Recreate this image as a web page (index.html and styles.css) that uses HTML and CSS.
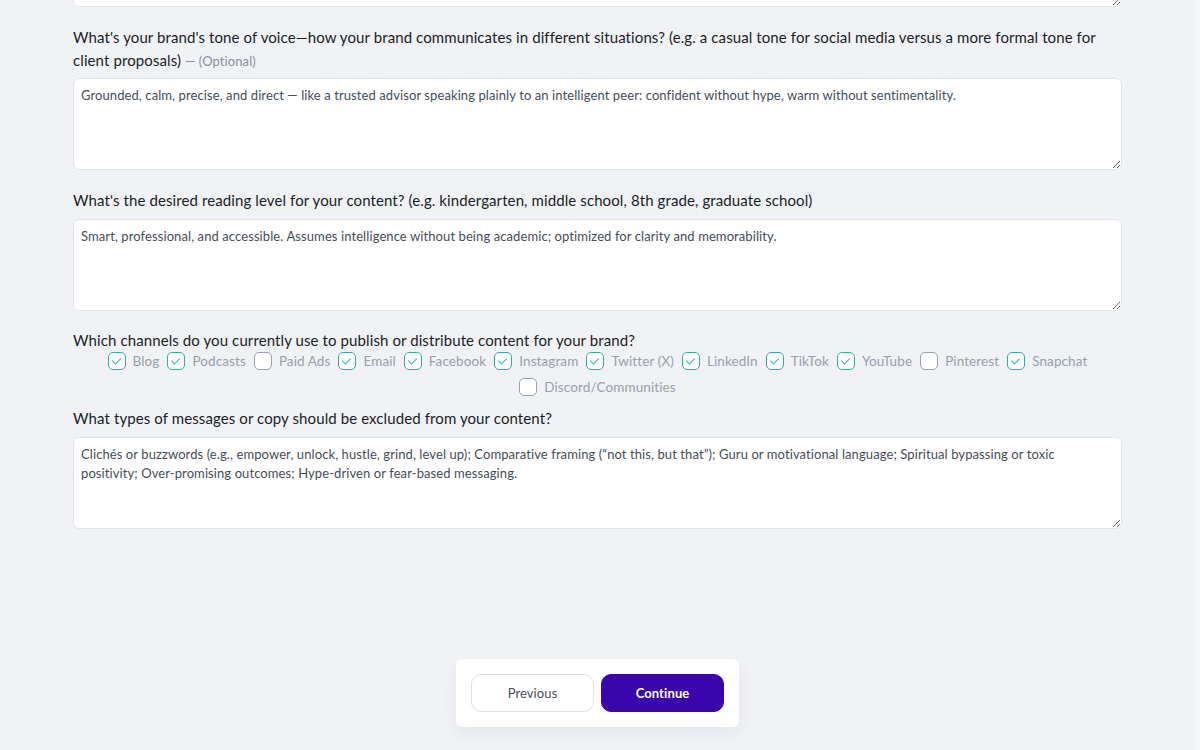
FILE: index.html
```html
<!DOCTYPE html>
<html lang="en">
<head>
<meta charset="utf-8">
<title>Brand voice</title>
<link rel="stylesheet" href="styles.css">
</head>
<body>
<div class="viewport">
  <main class="page">
    <div class="form">
      <div class="field field-first">
        <textarea class="box" aria-label="Previous answer"></textarea>
      </div>

      <div class="field">
        <label class="question q-two">What's your brand's tone of voice—how your brand communicates in different situations? (e.g. a casual tone for social media versus a more formal tone for client proposals) <span class="optional">— (Optional)</span></label>
        <textarea class="box">Grounded, calm, precise, and direct — like a trusted advisor speaking plainly to an intelligent peer: confident without hype, warm without sentimentality.</textarea>
      </div>

      <div class="field">
        <label class="question">What's the desired reading level for your content? (e.g. kindergarten, middle school, 8th grade, graduate school)</label>
        <textarea class="box">Smart, professional, and accessible. Assumes intelligence without being academic; optimized for clarity and memorability.</textarea>
      </div>

      <div class="field">
        <div class="question q-tight">Which channels do you currently use to publish or distribute content for your brand?</div>
        <div class="checks">
          <label class="check on"><span class="tick"></span>Blog</label>
          <label class="check on"><span class="tick"></span>Podcasts</label>
          <label class="check"><span class="tick"></span>Paid Ads</label>
          <label class="check on"><span class="tick"></span>Email</label>
          <label class="check on"><span class="tick"></span>Facebook</label>
          <label class="check on"><span class="tick"></span>Instagram</label>
          <label class="check on"><span class="tick"></span>Twitter (X)</label>
          <label class="check on"><span class="tick"></span>LinkedIn</label>
          <label class="check on"><span class="tick"></span>TikTok</label>
          <label class="check on"><span class="tick"></span>YouTube</label>
          <label class="check"><span class="tick"></span>Pinterest</label>
          <label class="check on"><span class="tick"></span>Snapchat</label>
          <label class="check"><span class="tick"></span>Discord/Communities</label>
        </div>
      </div>

      <div class="field field-after-checks">
        <label class="question">What types of messages or copy should be excluded from your content?</label>
        <textarea class="box">Clichés or buzzwords (e.g., empower, unlock, hustle, grind, level up); Comparative framing (“not this, but that”); Guru or motivational language; Spiritual bypassing or toxic positivity; Over-promising outcomes; Hype-driven or fear-based messaging.</textarea>
      </div>
    </div>

    <div class="nav">
      <div class="nav-card">
        <button class="btn btn-prev" type="button">Previous</button>
        <button class="btn btn-next" type="button">Continue</button>
      </div>
    </div>
  </main>
  <div class="gutter"></div>
</div>
</body>
</html>
```

FILE: styles.css
```css
* { box-sizing: border-box; }

html, body {
  margin: 0;
  padding: 0;
  height: 100%;
  overflow: hidden;
}

body {
  font-family: "Lato", "Noto Sans", sans-serif;
  background: #f0f2f6;
  color: #1b1e26;
}

.viewport {
  display: flex;
  height: 750px;
}

.page {
  flex: 0 0 1195px;
  background: #f0f2f6;
  overflow: hidden;
}

.gutter {
  flex: 1;
  background: #f7f8fa;
}

.form {
  width: 1049px;
  margin: -85px auto 0;
  display: flex;
  flex-direction: column;
}

.field {
  display: flex;
  flex-direction: column;
  margin-top: 19px;
}

.field-first { margin-top: 0; }
.field-after-checks { margin-top: 11px; }

.question {
  font-size: 15px;
  line-height: 23px;
  letter-spacing: 0.1px;
  color: #1b1e26;
  margin-bottom: 7px;
}

.q-two { margin-bottom: 5px; }

.q-tight { margin-bottom: 0; margin-top: -1px; }

.optional {
  font-size: 13px;
  letter-spacing: 0.1px;
  color: #8b9099;
}

.box {
  display: block;
  width: 100%;
  height: 92px;
  padding: 7px 7px;
  border: 1px solid #e1e4e9;
  border-radius: 6px;
  background: #ffffff;
  font-family: inherit;
  font-size: 13px;
  line-height: 19px;
  letter-spacing: 0.09px;
  color: #474d57;
  resize: vertical;
  outline: none;
}

.checks {
  display: flex;
  flex-wrap: wrap;
  justify-content: center;
  column-gap: 8px;
  row-gap: 8px;
  padding: 0 30px;
}

.check {
  display: flex;
  align-items: center;
  gap: 7px;
  height: 18px;
  font-size: 13.5px;
  letter-spacing: 0.1px;
  color: #9aa0aa;
}

.tick {
  width: 18px;
  height: 18px;
  border: 1.5px solid #9aa0aa;
  border-radius: 5px;
  background: #ffffff;
  position: relative;
  flex: 0 0 18px;
}

.check.on .tick {
  border-color: #2cb39b;
}

.check.on .tick::after {
  content: "";
  position: absolute;
  left: 5px;
  top: 3px;
  width: 4px;
  height: 7px;
  border: solid #2cb39b;
  border-width: 0 1.5px 1.5px 0;
  transform: rotate(45deg);
}

.nav {
  display: flex;
  justify-content: center;
  margin-top: 130px;
}

.nav-card {
  display: flex;
  gap: 7px;
  padding: 15px;
  background: #ffffff;
  border-radius: 6px;
  box-shadow: 0 6px 16px rgba(30, 40, 70, 0.06);
}

.btn {
  width: 123px;
  height: 38px;
  border-radius: 10px;
  font-family: inherit;
  font-size: 13px;
  letter-spacing: 0.1px;
  cursor: pointer;
}

.btn-prev {
  background: #ffffff;
  border: 1px solid #dfe2e7;
  color: #4a505a;
}

.btn-next {
  background: #3a05ad;
  border: 1px solid #3a05ad;
  color: #ffffff;
  font-weight: 700;
}
```
